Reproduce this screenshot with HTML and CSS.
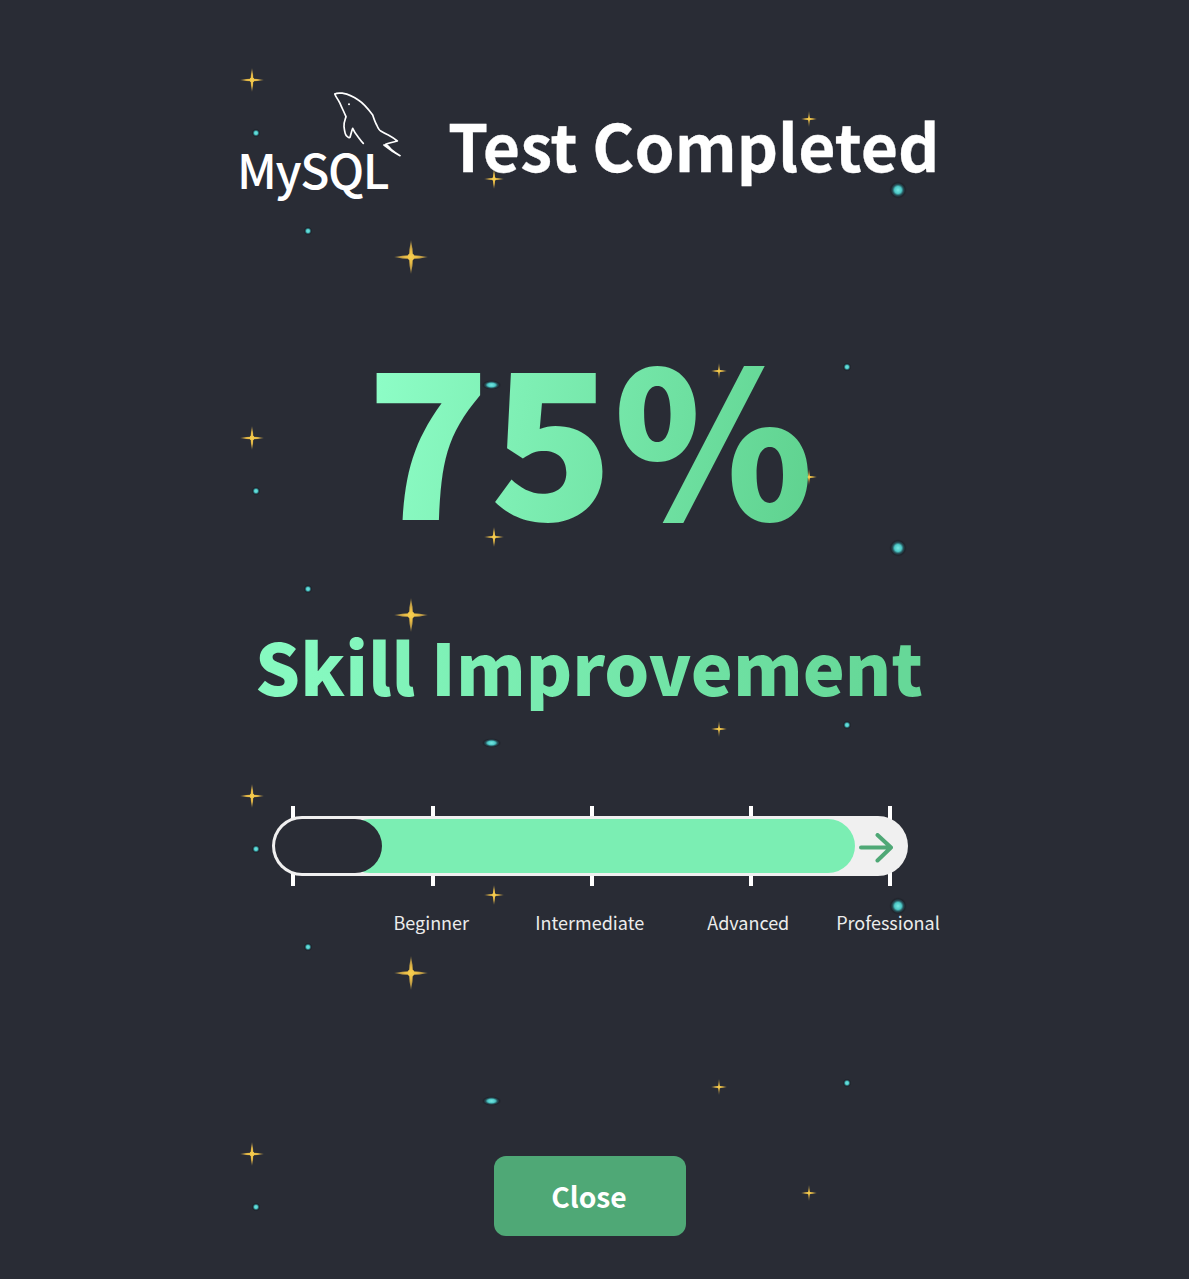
FILE: index.html
```html
<!DOCTYPE html>
<html lang="en">
<head>
<meta charset="utf-8">
<title>Test Completed</title>
<link rel="stylesheet" href="styles.css">
</head>
<body>
<svg class="sky" aria-hidden="true">
  <defs>
    <radialGradient id="tg">
      <stop offset="0" stop-color="#78e8e3"/>
      <stop offset=".38" stop-color="#4cc8c6"/>
      <stop offset=".6" stop-color="#27525a"/>
      <stop offset=".8" stop-color="#20232b"/>
      <stop offset="1" stop-color="#23262e" stop-opacity="0"/>
    </radialGradient>
    <radialGradient id="gg" gradientUnits="userSpaceOnUse" cx="0" cy="0" r="10">
      <stop offset="0" stop-color="#f8d050"/>
      <stop offset=".35" stop-color="#e8bb45"/>
      <stop offset=".75" stop-color="#a98c45"/>
      <stop offset="1" stop-color="#6c6040"/>
    </radialGradient>
    <filter id="soft" x="-30%" y="-30%" width="160%" height="160%"><feGaussianBlur stdDeviation=".45"/></filter>
    <g id="st" fill="url(#gg)">
      <path d="M-10 0Q0-2.200 10 0 0 2.200-10 0Z"/>
      <path d="M0-10Q2.200 0 0 10-2.200 0 0-10Z"/>
      <circle r="2"/>
    </g>
    <pattern id="field" patternUnits="userSpaceOnUse" width="1189" height="358">
      <g filter="url(#soft)">
        <use href="#st" transform="translate(252 20) scale(1.2)"/>
        <use href="#st" transform="translate(809 59) scale(.8)"/>
        <use href="#st" transform="translate(494 119) scale(1)"/>
        <use href="#st" transform="translate(411 197) scale(1.7)"/>
        <use href="#st" transform="translate(719 311) scale(.8)"/>
      </g>
      <circle cx="256" cy="73" r="4.500" fill="url(#tg)"/>
      <circle cx="898" cy="130" r="9" fill="url(#tg)"/>
      <circle cx="308" cy="171" r="4.500" fill="url(#tg)"/>
      <circle cx="847" cy="307" r="4.500" fill="url(#tg)"/>
      <ellipse cx="491.500" cy="325" rx="10" ry="5" fill="url(#tg)"/>
    </pattern>
  </defs>
  <rect width="100%" height="100%" fill="url(#field)"/>
</svg>
<main class="panel">
  <header class="head">
    <div class="logo">
      <svg class="dolphin" viewBox="0 0 70 66" aria-hidden="true">
        <path class="line" d="M1 3C3 1.500 6 2 9.300 2.300 14 3 20 6 24.300 9 29 12 35 19 38.700 24 40 28 41 31 42.700 34 44 37 45 39 46.700 40 50 42 52 43 54.300 44 58 46 61 48 63.300 50 59 51 55 52 51.700 53.300 54 55 56 57 57.700 59 60 61 63 63 66 64.700 61 62 55 58 50 54"/>
        <path class="line" d="M1 3C1 5 4 8 6 12.300 8 17 10 21 12 25.700 11 29 9.500 32 10 35.700 10.500 40 11 44 12.700 45 14 46.500 15.500 47 16 46.300 17 43 17.500 40 18.700 37.300 20 40 21 42 22.700 44 25 47 27 50 29.300 52.300"/>
        <circle cx="15" cy="13.300" r="1" fill="#fff"/>
      </svg>
      <span class="wordmark">MySQL</span>
    </div>
    <h1 class="title">Test Completed</h1>
  </header>
  <div class="score">75%</div>
  <h2 class="subtitle">Skill Improvement</h2>
  <div class="meter">
    <div class="ticks"><i></i><i></i><i></i><i></i><i></i></div>
    <div class="track">
      <div class="fill"></div>
      <div class="start"></div>
      <svg class="arrow" viewBox="0 0 34 30" aria-hidden="true"><path d="M2 14.500H32M18.500 2 32 14.500 18.500 27.500"/></svg>
    </div>
  </div>
  <div class="levels">
    <span class="level">Beginner</span>
    <span class="level">Intermediate</span>
    <span class="level">Advanced</span>
    <span class="level last">Professional</span>
  </div>
  <div class="actions"><button class="close" type="button">Close</button></div>
</main>
</body>
</html>
```
FILE: styles.css
```css
* { box-sizing: border-box; }
html, body { margin: 0; height: 100%; }
body {
  position: relative;
  min-height: 1279px;
  overflow: hidden;
  background: #292c35;
  color: #fff;
  font-family: "Noto Sans CJK JP", "Noto Sans", sans-serif;
}
.sky {
  position: absolute;
  top: 60px;
  left: 0;
  width: 1189px;
  height: 1165px;
}
.panel {
  position: relative;
  width: 700px;
  margin-left: 240px;
  padding-top: 88px;
}
.head {
  display: flex;
  align-items: center;
  height: 112px;
}
.logo {
  position: relative;
  width: 208px;
  height: 112px;
  flex: none;
}
.dolphin {
  position: absolute;
  left: 94px;
  top: 3px;
  width: 70px;
  height: 66px;
}
.line { fill: none; stroke: #fff; stroke-width: 1.700; stroke-linejoin: round; stroke-linecap: round; }
.wordmark {
  position: absolute;
  left: -3px;
  top: 45px;
  font-size: 48px;
  line-height: 70px;
  font-weight: 500;
  letter-spacing: -1.400px;
}
.title {
  margin: 0;
  font-size: 64.300px;
  line-height: 112px;
  font-weight: 700;
  white-space: nowrap;
  -webkit-text-stroke: .3px #fff;
}
.score {
  margin-top: 112px;
  text-align: center;
  font-size: 203px;
  line-height: 240px;
  font-weight: 900;
  background: linear-gradient(100deg, #8dfdc6 20%, #5fd28f 82%);
  -webkit-background-clip: text;
  background-clip: text;
  color: transparent;
}
.subtitle {
  margin: 63px 0 0;
  padding-right: 2px;
  text-align: center;
  font-size: 70.800px;
  line-height: 100px;
  font-weight: 900;
  background: linear-gradient(90deg, #86f9c0 10%, #66d898 90%);
  -webkit-background-clip: text;
  background-clip: text;
  color: transparent;
}
.meter {
  position: relative;
  margin: 101px 0 0 32px;
  width: 636px;
  height: 60px;
}
.ticks {
  position: absolute;
  left: 19px;
  top: -10px;
  display: grid;
  grid-template-columns: 140px 159px 159px 139px 4px;
  height: 80px;
}
.ticks i {
  display: block;
  width: 4px;
  height: 80px;
  background: #fff;
}
.track {
  position: relative;
  height: 60px;
  border-radius: 30px;
  background: #f0f0f0;
}
.fill {
  position: absolute;
  left: 71px;
  top: 3px;
  width: 512px;
  height: 54px;
  border-radius: 27px;
  background: #7beeb3;
}
.start {
  position: absolute;
  left: 3px;
  top: 3px;
  width: 107px;
  height: 54px;
  border-radius: 27px;
  background: #292c35;
}
.arrow {
  position: absolute;
  left: 587px;
  top: 17px;
  width: 34px;
  height: 30px;
  fill: none;
  stroke: #4fa876;
  stroke-width: 4;
  stroke-linecap: round;
  stroke-linejoin: round;
}
.levels {
  display: flex;
  margin-top: 33px;
  padding-left: 112px;
  white-space: nowrap;
}
.level {
  flex: none;
  width: 158.500px;
  text-align: center;
  font-size: 18px;
  line-height: 26px;
  color: #ececec;
}
.level.last { width: 121px; }
.actions {
  display: flex;
  justify-content: center;
  margin-top: 221px;
}
.close {
  width: 192px;
  height: 80px;
  padding: 0 2px 2px 0;
  border: 0;
  border-radius: 12px;
  background: #4fa876;
  color: #fff;
  font-family: inherit;
  font-size: 28.300px;
  font-weight: 700;
}
```
